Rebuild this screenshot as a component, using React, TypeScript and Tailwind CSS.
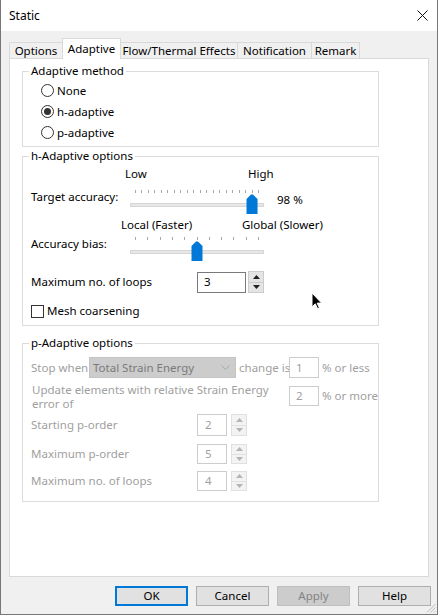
import React from "react";

const off = "text-[#a0a0a0]";

function Radio({ checked }: { checked?: boolean }) {
    return (
        <span className="flex h-[13px] w-[13px] shrink-0 items-center justify-center rounded-full border border-[#333333] bg-white">
            {checked && <span className="h-[7px] w-[7px] rounded-full bg-[#333333]" />}
        </span>
    );
}

function Arrow({ up, color }: { up?: boolean; color: string }) {
    return (
        <svg width="7" height="4" viewBox="0 0 7 4">
            <polygon points={up ? "0,4 7,4 3.5,0" : "0,0 7,0 3.5,4"} fill={color} />
        </svg>
    );
}

function Spin({ disabled, tall }: { disabled?: boolean; tall?: boolean }) {
    const color = disabled ? "#b4b4b4" : "#222222";
    return (
        <div
            className={`flex w-[16px] shrink-0 flex-col border ${tall ? "h-[22px]" : "h-[20px]"} ${
                disabled ? "border-[#e0e0e0] bg-[#f3f3f3]" : "border-[#cccccc] bg-[#e5e5e5]"
            }`}
        >
            <div className={`flex flex-1 items-center justify-center border-b ${disabled ? "border-[#e0e0e0]" : "border-[#cccccc]"}`}>
                <Arrow up color={color} />
            </div>
            <div className="flex flex-1 items-center justify-center">
                <Arrow color={color} />
            </div>
        </div>
    );
}

function Slider({ ticks, index }: { ticks: number; index: number }) {
    const step = 123 / (ticks - 1);
    const cx = 5.5 + index * step;
    return (
        <svg width="134" height="24" viewBox="0 0 134 24" className="shrink-0">
            {Array.from({ length: ticks }).map((_, i) => (
                <rect key={i} x={Math.round(5 + i * step)} y="0" width="1" height="3" fill="#a8a8a8" />
            ))}
            <rect x="0.5" y="13.5" width="133" height="3" fill="#e7e7e7" stroke="#d6d6d6" />
            <polygon
                points={`${cx - 5.5},24 ${cx - 5.5},9 ${cx - 1},4.5 ${cx + 1},4.5 ${cx + 5.5},9 ${cx + 5.5},24`}
                fill="#0078d7"
            />
        </svg>
    );
}

function Box({ value, disabled, w, h, pl }: { value: string; disabled?: boolean; w: string; h: string; pl: string }) {
    return (
        <div
            className={`flex shrink-0 items-center border bg-white ${w} ${h} ${pl} ${
                disabled ? "border-[#cccccc] text-[#a0a0a0]" : "border-[#7a7a7a] text-black"
            }`}
        >
            {value}
        </div>
    );
}

function Group({ title, className, children }: { title: string; className: string; children: React.ReactNode }) {
    return (
        <fieldset className={`ml-[12px] w-[357px] border border-[#dcdcdc] ${className}`}>
            <legend className="ml-[6px] px-[2px] leading-[16px] text-black">{title}</legend>
            {children}
        </fieldset>
    );
}

export default function App() {
    const tabs = [
        { label: "Options", cls: "w-[53px] h-[17px] border-l border-t" },
        { label: "Adaptive", cls: "w-[59px] h-[21px] border-l border-t border-r bg-white relative z-10", active: true },
        { label: "Flow/Thermal Effects", cls: "w-[117px] h-[17px] border-t border-r" },
        { label: "Notification", cls: "w-[74px] h-[17px] border-t border-r" },
        { label: "Remark", cls: "w-[48px] h-[17px] border-t border-r" },
    ];

    return (
        <div className="relative flex h-[615px] w-[438px] flex-col whitespace-nowrap border-x border-b border-[#777777] bg-[#f0f0f0] font-['Noto_Sans',sans-serif] text-[11.5px] text-black">
            {/* title bar */}
            <div className="flex h-[31px] shrink-0 items-center justify-between bg-white pl-[8px] pr-[9px]">
                <span className="text-[12px] leading-[16px]">Static</span>
                <svg width="11" height="11" viewBox="0 0 11 11">
                    <path d="M0.5 0.5 L10.5 10.5 M10.5 0.5 L0.5 10.5" stroke="#111" strokeWidth="1" />
                </svg>
            </div>

            {/* tabs */}
            <div className="ml-[8px] mt-[7px] flex h-[21px] items-end">
                {tabs.map((t) => (
                    <div
                        key={t.label}
                        className={`flex shrink-0 items-center justify-center border-[#d9d9d9] leading-[16px] ${t.cls} ${
                            t.active ? "" : "bg-[#f0f0f0]"
                        }`}
                    >
                        {t.label}
                    </div>
                ))}
            </div>

            {/* panel */}
            <div className="-mt-px ml-[8px] flex h-[519px] w-[420px] flex-col border border-[#d9d9d9] bg-white">
                <Group title="Adaptive method" className="mt-[4px] pb-[3px] pt-[1px]">
                    <label className="flex h-[21px] items-center gap-[3px] pl-[18px]">
                        <Radio />
                        <span>None</span>
                    </label>
                    <label className="flex h-[21px] items-center gap-[3px] pl-[18px]">
                        <Radio checked />
                        <span>h-adaptive</span>
                    </label>
                    <label className="flex h-[21px] items-center gap-[3px] pl-[18px]">
                        <Radio />
                        <span>p-adaptive</span>
                    </label>
                </Group>

                <Group title="h-Adaptive options" className="mt-[1px] pb-[6px]">
                    <div className="flex h-[22px] pl-[102px] pt-[2px] leading-[16px]">
                        <span className="w-[123px]">Low</span>
                        <span>High</span>
                    </div>
                    <div className="flex h-[28px] items-start leading-[16px]">
                        <span className="mt-[3px] w-[107px] pl-[8px]">Target accuracy:</span>
                        <div className="mt-[4px]">
                            <Slider ticks={20} index={18} />
                        </div>
                        <span className="ml-[13px] mt-[6px]">98 %</span>
                    </div>
                    <div className="flex h-[20px] pl-[98px] pt-[3px] leading-[16px]">
                        <span className="w-[121px]">Local (Faster)</span>
                        <span>Global (Slower)</span>
                    </div>
                    <div className="flex h-[27px] items-start leading-[16px]">
                        <span className="mt-[2px] w-[107px] pl-[8px]">Accuracy bias:</span>
                        <div className="mt-[3px]">
                            <Slider ticks={11} index={5} />
                        </div>
                    </div>
                    <div className="mt-[10px] flex items-center">
                        <span className="w-[174px] pl-[8px]">Maximum no. of loops</span>
                        <Box value="3" w="w-[49px]" h="h-[21px]" pl="pl-[6px]" />
                        <div className="ml-[2px]">
                            <Spin tall />
                        </div>
                    </div>
                    <label className="mt-[10px] flex h-[16px] items-center gap-[3px] pl-[8px] leading-[16px]">
                        <span className="h-[13px] w-[13px] shrink-0 border border-[#333333] bg-white" />
                        <span>Mesh coarsening</span>
                    </label>
                </Group>

                <Group title="p-Adaptive options" className="mt-[9px] pb-[10px]">
                    <div className={`mt-[6px] flex h-[21px] items-center ${off}`}>
                        <span className="w-[66px] shrink-0 pl-[8px]">Stop when</span>
                        <div className="flex h-[21px] w-[147px] shrink-0 items-center justify-between border border-[#c4c4c4] bg-[#cccccc] pl-[3px] pr-[5px] text-[#7a7a7a]">
                            <span>Total Strain Energy</span>
                            <svg width="9" height="5" viewBox="0 0 9 5">
                                <path d="M0.5 0.5 L4.5 4.5 L8.5 0.5" stroke="#a8a8a8" fill="none" />
                            </svg>
                        </div>
                        <span className="w-[53px] shrink-0 pl-[3px]">change is</span>
                        <Box value="1" disabled w="w-[30px]" h="h-[21px]" pl="pl-[6px]" />
                        <span className="ml-[3px]">% or less</span>
                    </div>
                    <div className={`mt-[5px] flex items-start leading-[14px] ${off}`}>
                        <span className="w-[266px] shrink-0 pl-[9px]">
                            Update elements with relative Strain Energy
                            <br />
                            error of
                        </span>
                        <div className="mt-[3px] flex items-center">
                            <Box value="2" disabled w="w-[30px]" h="h-[20px]" pl="pl-[6px]" />
                            <span className="ml-[3px] leading-[16px]">% or more</span>
                        </div>
                    </div>
                    <div className={`mt-[3px] flex items-center ${off}`}>
                        <span className="w-[174px] shrink-0 pl-[8px]">Starting p-order</span>
                        <Box value="2" disabled w="w-[30px]" h="h-[22px]" pl="pl-[7px]" />
                        <div className="ml-[4px]">
                            <Spin disabled tall />
                        </div>
                    </div>
                    <div className={`mt-[8px] flex items-center ${off}`}>
                        <span className="w-[174px] shrink-0 pl-[8px]">Maximum p-order</span>
                        <Box value="5" disabled w="w-[30px]" h="h-[20px]" pl="pl-[7px]" />
                        <div className="ml-[4px]">
                            <Spin disabled />
                        </div>
                    </div>
                    <div className={`mt-[7px] flex items-center ${off}`}>
                        <span className="w-[174px] shrink-0 pl-[8px]">Maximum no. of loops</span>
                        <Box value="4" disabled w="w-[30px]" h="h-[20px]" pl="pl-[7px]" />
                        <div className="ml-[4px]">
                            <Spin disabled />
                        </div>
                    </div>
                </Group>
            </div>

            {/* buttons */}
            <div className="mt-[9px] flex justify-end gap-[8px] pr-[6px]">
                <button className="flex h-[20px] w-[73px] items-center justify-center border-2 border-[#0078d7] bg-[#e1e1e1]">OK</button>
                <button className="flex h-[20px] w-[73px] items-center justify-center border border-[#adadad] bg-[#e1e1e1]">Cancel</button>
                <button className="flex h-[20px] w-[73px] items-center justify-center border border-[#bfbfbf] bg-[#cccccc] text-[#838383]">
                    Apply
                </button>
                <button className="flex h-[20px] w-[73px] items-center justify-center border border-[#adadad] bg-[#e1e1e1]">Help</button>
            </div>

            {/* resize grip */}
            <svg className="absolute bottom-[1px] right-[1px]" width="10" height="10" viewBox="0 0 10 10">
                <path d="M9.5 1 L1 9.5 M9.5 4.5 L4.5 9.5 M9.5 8 L8 9.5" stroke="#bcbcbc" strokeWidth="1" />
            </svg>

            {/* mouse pointer */}
            <svg className="absolute left-[310px] top-[292px]" width="12" height="18" viewBox="0 0 12 18">
                <path d="M1 1 L1 15 L4.3 11.8 L6.6 16.8 L8.4 16 L6.2 11.1 L10.6 11.1 Z" fill="#000" stroke="#fff" strokeWidth="1" strokeLinejoin="round" />
            </svg>
        </div>
    );
}
